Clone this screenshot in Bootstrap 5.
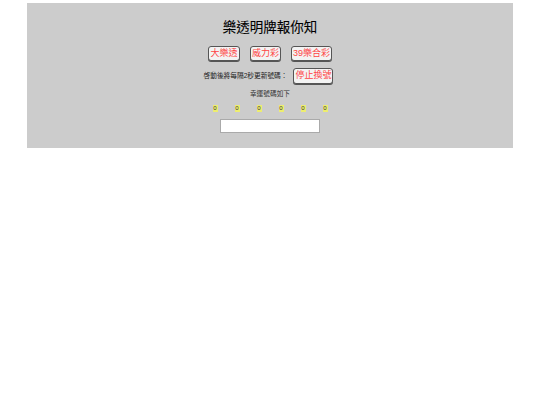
<!DOCTYPE html>
<html lang="zh-Hant">
<head>
<meta charset="utf-8">
<title>樂透明牌報你知</title>
<link href="https://cdn.jsdelivr.net/npm/bootstrap@5.3.0/dist/css/bootstrap.min.css" rel="stylesheet">
<style>
body { background: #fff; font-family: "Liberation Sans", "Noto Sans CJK TC", sans-serif; color: #000; }
.lotto-panel { width: 486px; height: 145px; margin: 3px 0 0 27px; background: #ccc; padding-top: 16px; }
.lotto-title { font-size: 13.5px; line-height: 18px; font-weight: 400; margin: 0 0 8px; -webkit-text-stroke: .1px #000; }
.lotto-btn { flex: none; height: 15px; font-size: 9px; line-height: 11px; padding: 0; white-space: nowrap; color: #f44; background: #f3f3f3; border: 1px solid #555; border-radius: 3px; box-shadow: 0 1px 0 #555; width: 32px; }
.lotto-btn.narrow { width: 31px; }
.lotto-btn.wide { width: 41px; }
.lotto-btn.stop { width: 40px; height: 16px; }
.lotto-row { gap: 10px; height: 17px; margin-bottom: 5px; }
.lotto-row2 { gap: 6px; height: 17px; font-size: 6.7px; color: #222; padding-right: 3px; }
.lotto-row2 span { padding-top: 1px; }
.lotto-msg { font-size: 6.7px; line-height: 9px; color: #333; margin-top: 5px; }
.lotto-nums { gap: 17px; margin-top: 6px; height: 9px; }
.lotto-num { width: 5px; height: 7px; background: #eded70; font-size: 6px; line-height: 7px; color: #333; text-align: center; }
.lotto-input { display: block; width: 100px; height: 14px; margin: 6px auto 0; background: #fff; border: 1px solid #aaa; }
</style>
</head>
<body>
<div class="lotto-panel text-center">
  <h1 class="lotto-title">樂透明牌報你知</h1>
  <div class="lotto-row d-flex justify-content-center align-items-center">
    <button type="button" class="lotto-btn">大樂透</button>
    <button type="button" class="lotto-btn narrow">威力彩</button>
    <button type="button" class="lotto-btn wide">39樂合彩</button>
  </div>
  <div class="lotto-row2 d-flex justify-content-center align-items-center">
    <span>啓動後將每隔2秒更新號碼：</span>
    <button type="button" class="lotto-btn stop">停止換號</button>
  </div>
  <div class="lotto-msg">幸運號碼如下</div>
  <div class="lotto-nums d-flex justify-content-center align-items-center">
    <span class="lotto-num">0</span><span class="lotto-num">0</span><span class="lotto-num">0</span><span class="lotto-num">0</span><span class="lotto-num">0</span><span class="lotto-num">0</span>
  </div>
  <input class="lotto-input" type="text" aria-label="號碼">
</div>
<script src="https://cdn.jsdelivr.net/npm/bootstrap@5.3.0/dist/js/bootstrap.bundle.min.js"></script>
</body>
</html>
